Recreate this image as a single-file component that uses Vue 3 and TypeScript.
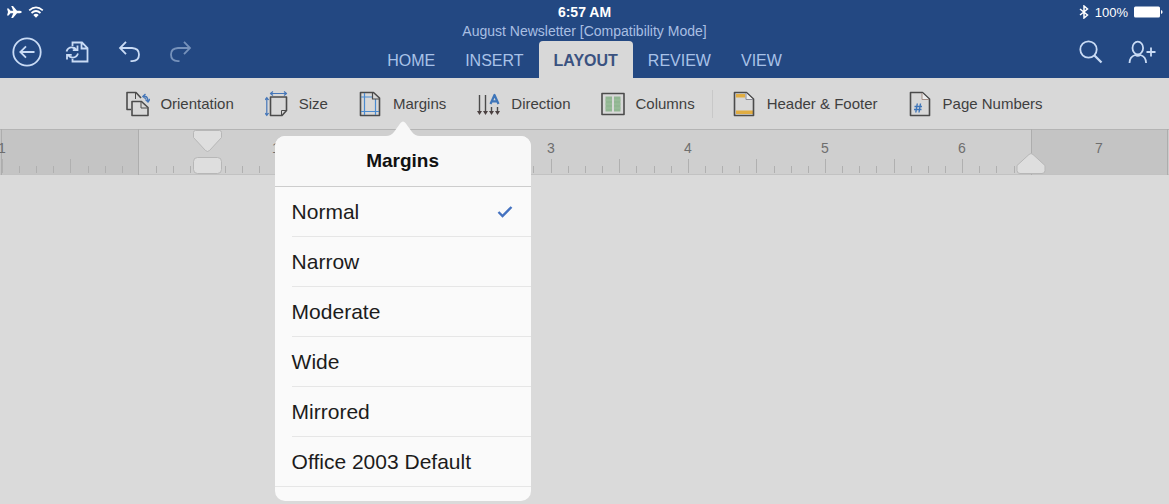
<script setup lang="ts">
import { ref } from 'vue'

const tabs = ['HOME', 'INSERT', 'LAYOUT', 'REVIEW', 'VIEW']
const activeTab = ref('LAYOUT')

const tools = [
  { id: 'orientation', label: 'Orientation' },
  { id: 'size', label: 'Size' },
  { id: 'margins', label: 'Margins' },
  { id: 'direction', label: 'Direction' },
  { id: 'columns', label: 'Columns' },
  { id: 'header', label: 'Header & Footer' },
  { id: 'numbers', label: 'Page Numbers' },
]

const presets = ['Normal', 'Narrow', 'Moderate', 'Wide', 'Mirrored', 'Office 2003 Default']
const selected = ref('Normal')
const open = ref(true)

function press(id: string) {
  if (id === 'margins') open.value = !open.value
}

// Ruler geometry: zero sits at the left page margin, eight divisions per inch
const zero = 139
const inch = 137.2
const at = (inches: number) => Math.round(zero + inches * inch)
const ticks = Array.from({ length: 61 }, (_, i) => i - 8)
  .filter((n) => n !== 0 && n !== 52)
  .map((n) => ({ x: at(n / 8), top: n % 4 === 0 ? 30 : 37 }))
const numbers = [-1, 1, 2, 3, 4, 5, 6, 7].map((n) => ({ x: at(n), text: String(Math.abs(n)) }))
</script>

<template>
  <div class="app">
    <header class="top">
      <div class="status">
        <div class="status-side">
          <svg width="16" height="14" viewBox="0 0 16 14" aria-label="Airplane mode">
            <path d="M1 3.500h1.600l1.900 2.300h2.800L5.200 1h1.800l4 4.800h3q1.800.3 1.800 1.200t-1.800 1.200h-3l-4 4.800H5.200l2.100-4.800H4.500l-1.900 2.300H1L2 7z" fill="#fff" />
          </svg>
          <svg width="16" height="14" viewBox="0 0 16 14" fill="none" stroke="#fff" stroke-width="1.700" aria-label="Wi-Fi">
            <path d="M1.200 5.400q6.800-6 13.600 0M3.500 8q4.500-4 9 0" />
            <path d="M8 12.800 5.300 9.900q2.700-2.200 5.400 0z" fill="#fff" stroke="none" />
          </svg>
        </div>
        <span class="clock">6:57 AM</span>
        <div class="status-side end">
          <svg width="10" height="14" viewBox="0 0 10 14" fill="none" stroke="#fff" stroke-width="1.500" aria-label="Bluetooth">
            <path d="M1 4l7.500 6L5 13V1l3.500 3L1 10" />
          </svg>
          <span class="percent">100%</span>
          <svg width="29" height="12" viewBox="0 0 29 12" fill="#fff" aria-label="Battery full">
            <rect x="0" y="0.500" width="26" height="11" rx="1.500" />
            <path d="M27 4q1.600.4 1.600 2T27 8z" />
          </svg>
        </div>
      </div>
      <div class="nav">
        <div class="actions">
          <button type="button" aria-label="Back">
            <svg width="30" height="30" viewBox="0 0 30 30">
              <circle cx="15" cy="15" r="13.700" />
              <path d="M22.500 15H8.500M14 9.300 8.300 15l5.700 5.700" />
            </svg>
          </button>
          <button type="button" aria-label="Sync document">
            <svg width="30" height="30" viewBox="0 0 30 30">
              <path d="M9.500 9V5.500H19l5.500 5.500v13.500H9.500V22M18.500 5.500V11.500h6" />
              <path d="M3.500 14.500q1.600-4.500 6-4 2.500.3 4 2.400M14.500 8.500v4.700H9.800M15 16.500q-1.600 4.500-6 4-2.500-.3-4-2.400M4 22.500v-4.700h4.700" />
            </svg>
          </button>
          <button type="button" aria-label="Undo">
            <svg width="30" height="30" viewBox="0 0 30 30">
              <path d="M12 4.800 6 11l6 6.200M6.500 11H18q7 .4 7 6.500 0 6.500-7 6.700h-1.500" />
            </svg>
          </button>
          <button type="button" aria-label="Redo" disabled>
            <svg width="30" height="30" viewBox="0 0 30 30">
              <path d="M19 4.800 25 11l-6 6.200M24.500 11H13q-7 .4-7 6.500 0 6.500 7 6.700h1.500" />
            </svg>
          </button>
        </div>
        <div class="center">
          <h1>August Newsletter [Compatibility Mode]</h1>
          <nav class="tabs">
            <button
              v-for="tab in tabs"
              :key="tab"
              type="button"
              :class="{ active: tab === activeTab }"
              @click="activeTab = tab"
            >{{ tab }}</button>
          </nav>
        </div>
        <div class="actions end">
          <button type="button" aria-label="Search">
            <svg width="30" height="30" viewBox="0 0 30 30">
              <circle cx="12.500" cy="12.500" r="8.200" />
              <path d="M18.500 18.500 25.500 25.500" stroke-width="2.300" />
            </svg>
          </button>
          <button type="button" aria-label="Share">
            <svg width="30" height="30" viewBox="0 0 30 30">
              <ellipse cx="10.800" cy="11" rx="5.300" ry="6.300" />
              <path d="M2.500 26q.2-6.500 5.700-8 2.600 1.800 5.200 0 5.500 1.500 5.700 8M19.500 15h9M24 10.500v9" />
            </svg>
          </button>
        </div>
      </div>
    </header>

    <div class="toolbar" role="toolbar" aria-label="Layout">
      <div v-for="tool in tools" :key="tool.id" class="tool" :class="{ divided: tool.id === 'header' }">
        <button type="button" @click="press(tool.id)">
          <svg width="24" height="26" viewBox="0 0 24 26" fill="none" stroke="#4b4b4b" stroke-width="1.600" stroke-linejoin="round" aria-hidden="true">
            <g v-if="tool.id === 'orientation'">
              <path d="M5 18.500H1V1.500h9l5 5.500" />
              <path d="M9.500 2v6" stroke-width="1" />
              <path d="M6 24.500V10.500h9.500l6.500 6v8z" />
              <path d="M15 11v6h6.500" stroke-width="1" />
              <path d="M17 5.500q4.500-1.500 5 4.500M19.500 8.500l2.500 2.500 2-3M19.500 3l-2.700 2.500 3 2.200" stroke="#4576b8" stroke-width="1.400" />
            </g>
            <g v-else-if="tool.id === 'size'">
              <path d="M5.500 6h16v13.500l-4.500 5H5.500z" />
              <path d="M21 19.500h-4.500V24" stroke-width="1" />
              <path d="M6 2.500h15M8 .5l-2.500 2L8 4.500M19 .5l2.500 2-2.500 2M1.800 7v17M0 9l1.800-2.500L3.600 9M0 22l1.800 2.500L3.600 22" stroke="#4576b8" stroke-width="1.200" />
            </g>
            <g v-else-if="tool.id === 'margins'">
              <path d="M1.500 1.500h13l6 5.500v17.500h-19z" />
              <path d="M5.500 2v22M16.500 8v16M2 6h11M2 20.500h18" stroke="#4b8bd0" stroke-width="1.200" />
              <path d="M13.500 1.500V8h7" stroke-width="1.200" />
            </g>
            <g v-else-if="tool.id === 'direction'">
              <path d="M2.500 4v18M8.500 4v18M14.500 16v6M20.500 16v6" stroke-width="1.400" />
              <path d="m0 20 2.500 4 2.500-4zM6 20l2.500 4 2.500-4zM12 20l2.500 4 2.500-4zM18 20l2.500 4 2.500-4z" fill="#4b4141" stroke="none" />
              <path d="m13.500 13 4-9 4 9M15 10.300h5" stroke="#3e75b9" stroke-width="2.200" />
            </g>
            <g v-else-if="tool.id === 'columns'">
              <rect x="1" y="2.500" width="22" height="21" />
              <path d="M4.500 5.500H11v15H4.500zM13 5.500h6.500v15H13z" fill="#91b692" stroke="none" />
              <path d="M4.500 9H11M4.500 13H11M4.500 17H11M13 9h6.500M13 13h6.500M13 17h6.500" stroke="#9dbf9d" stroke-width="1" />
            </g>
            <g v-else-if="tool.id === 'header'">
              <path d="M3 3h9v3.500H3zM3 19.500h17v3.500H3z" fill="#e1ad42" stroke="none" />
              <path d="M1.500 1.500h12l7 6.500v16.500h-19z" />
              <path d="M13 2v6.500h7" stroke="#8b8c96" stroke-width="1" fill="#eee" />
            </g>
            <g v-else>
              <path d="M1.500 1.500h12l7 6.500v16.500h-19z" />
              <path d="M13 2v6.500h7" stroke="#a58f87" stroke-width="1" fill="#eee" />
              <path d="m8.300 12.500-1.500 9M11.500 12.500l-1.500 9M5.500 15.500H13M5 18.500h7.500" stroke="#3e75b9" stroke-width="1.400" />
            </g>
          </svg>
          <span>{{ tool.label }}</span>
        </button>

        <section v-if="tool.id === 'margins' && open" class="popover" aria-label="Margins">
          <svg class="arrow" width="34" height="15" viewBox="0 0 34 15" aria-hidden="true">
            <path d="M0 15q5 0 8-4l6.500-9q2.500-3 5 0l6.500 9q3 4 8 4z" fill="#f8f8f8" />
          </svg>
          <h2>Margins</h2>
          <ul>
            <li v-for="preset in presets" :key="preset">
              <button type="button" :aria-pressed="preset === selected" @click="selected = preset">
                <span>{{ preset }}</span>
                <svg v-if="preset === selected" width="16" height="14" viewBox="0 0 16 14" aria-hidden="true">
                  <path d="m1.500 7 4 4 9-9" fill="none" stroke="#4472c0" stroke-width="2.400" />
                </svg>
              </button>
            </li>
          </ul>
        </section>
      </div>
    </div>

    <svg class="ruler" width="100%" height="46" role="img" aria-label="Ruler">
      <rect width="100%" height="46" fill="#cfcfcf" />
      <rect :width="zero" height="46" fill="#c4c4c4" />
      <rect :x="at(6.5)" :width="inch" height="46" fill="#c4c4c4" />
      <path d="M0 .5h4000" stroke="#b4b4b4" />
      <path d="M0 45.500h4000" stroke="#c2c2c2" />
      <path :d="`M${zero - 0.5} 0v46M${at(6.5) + 0.5} 0v46M${at(7.5) - 0.5} 0v46M1.5 0v46`" stroke="#adadad" />
      <path v-for="t in ticks" :key="t.x" :d="`M${t.x + 0.5} ${t.top}V44`" stroke="#b0b0b0" />
      <text v-for="n in numbers" :key="n.x" :x="n.x" y="24" text-anchor="middle">{{ n.text }}</text>
      <g fill="#dedede" stroke="#b7b7b7">
        <path d="M195.500 1.500h24q2 0 2 2v5l-12 13q-2 2-4 0l-12-13v-5q0-2 2-2z" />
        <rect x="193.500" y="28.500" width="28" height="16" rx="4" />
        <path d="M1029 25.500q2-2 4 0l12 11v5q0 3-3 3h-22q-3 0-3-3v-5z" />
      </g>
    </svg>
    <main class="canvas"></main>
  </div>
</template>

<style>
body {
  background: #dadada;
}
</style>

<style scoped>
.app {
  min-height: 100vh;
  background: #dadada;
  font-family: "Liberation Sans", Arial, sans-serif;
  overflow: hidden;
}

button {
  border: 0;
  padding: 0;
  background: none;
  font: inherit;
  color: inherit;
  cursor: pointer;
}

svg {
  display: block;
  flex: none;
}

.top {
  background: #234882;
}

.status {
  display: grid;
  grid-template-columns: 1fr auto 1fr;
  align-items: center;
  height: 24px;
  padding: 0 6px;
  color: #fff;
}

.status-side {
  display: flex;
  align-items: center;
  gap: 6px;
}

.end {
  justify-content: flex-end;
}

.clock {
  font-size: 14px;
  font-weight: 700;
}

.percent {
  font-size: 13px;
}

.nav {
  display: grid;
  grid-template-columns: 1fr auto 1fr;
  padding: 0 12px;
}

.actions {
  display: flex;
  align-items: center;
  gap: 21px;
  padding-top: 2px;
}

.actions svg {
  fill: none;
  stroke: #c9dbf5;
  stroke-width: 1.8px;
}

.actions button:disabled {
  opacity: 0.5;
}

.center {
  display: flex;
  flex-direction: column;
  align-items: center;
}

h1 {
  margin: 0;
  font-size: 14px;
  line-height: 14px;
  font-weight: 400;
  color: #a9bfe2;
  padding-bottom: 3px;
}

.tabs {
  display: flex;
}

.tabs button {
  height: 37px;
  padding: 2px 15px 0;
  border-radius: 4px 4px 0 0;
  font-size: 16px;
  color: #a9c2e8;
}

.tabs .active {
  background: #d8d8d8;
  color: #3a5280;
  font-weight: 700;
}

.toolbar {
  display: flex;
  justify-content: center;
  gap: 31px;
  height: 51px;
  background: #d8d8d8;
}

.tool {
  position: relative;
  display: flex;
  align-items: center;
}

.tool > button {
  display: flex;
  align-items: center;
  gap: 10px;
  font-size: 15px;
  color: #3f3f3f;
  white-space: nowrap;
}

.divided {
  margin-left: -14px;
}

.divided::before {
  content: "";
  width: 1px;
  height: 28px;
  margin-right: 20px;
  background: #c8c8c8;
}

.popover {
  position: absolute;
  z-index: 2;
  top: 58px;
  left: 50%;
  width: 256px;
  transform: translateX(-50%);
  padding-bottom: 14px;
  border-radius: 10px;
  background: #fafafa;
}

.arrow {
  position: absolute;
  bottom: 100%;
  left: 50%;
  transform: translateX(-50%);
}

h2 {
  margin: 0;
  border-bottom: 1px solid #cdcdcd;
  border-radius: 10px 10px 0 0;
  background: #f8f8f8;
  font-size: 19px;
  line-height: 50px;
  text-align: center;
  color: #111;
}

ul {
  list-style: none;
  margin: 0;
  padding: 0;
}

li {
  padding-left: 17px;
}

li button {
  display: flex;
  align-items: center;
  justify-content: space-between;
  width: 100%;
  height: 50px;
  padding-right: 18px;
  border-bottom: 1px solid #e6e6e6;
  font-size: 21px;
  color: #1c1c1c;
}

li:last-child {
  padding-left: 0;
}

li:last-child button {
  padding-left: 17px;
}

.ruler text {
  font-size: 14px;
  fill: #6e6e6e;
}
</style>
